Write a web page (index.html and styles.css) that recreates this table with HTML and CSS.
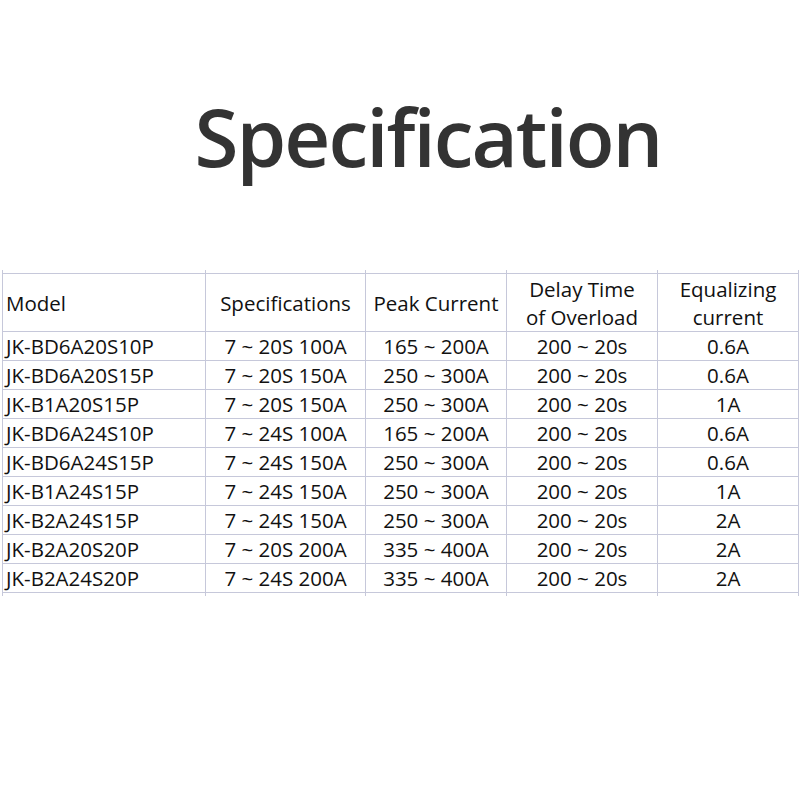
FILE: index.html
```html
<!DOCTYPE html>
<html>
<head>
<meta charset="utf-8">
<link rel="stylesheet" href="styles.css">
</head>
<body>
<div class="page">
  <h1 class="title">Specification</h1>
  <table class="spec">
    <colgroup>
      <col class="c1"><col class="c2"><col class="c3"><col class="c4"><col class="c5">
    </colgroup>
    <thead>
      <tr class="stub top"><td></td><td></td><td></td><td></td><td></td></tr>
      <tr>
        <th class="left">Model</th>
        <th>Specifications</th>
        <th>Peak Current</th>
        <th>Delay Time<br>of Overload</th>
        <th>Equalizing<br>current</th>
      </tr>
    </thead>
    <tbody>
      <tr><td class="left">JK-BD6A20S10P</td><td>7 ~ 20S 100A</td><td>165 ~ 200A</td><td>200 ~ 20s</td><td>0.6A</td></tr>
      <tr><td class="left">JK-BD6A20S15P</td><td>7 ~ 20S 150A</td><td>250 ~ 300A</td><td>200 ~ 20s</td><td>0.6A</td></tr>
      <tr><td class="left">JK-B1A20S15P</td><td>7 ~ 20S 150A</td><td>250 ~ 300A</td><td>200 ~ 20s</td><td>1A</td></tr>
      <tr><td class="left">JK-BD6A24S10P</td><td>7 ~ 24S 100A</td><td>165 ~ 200A</td><td>200 ~ 20s</td><td>0.6A</td></tr>
      <tr><td class="left">JK-BD6A24S15P</td><td>7 ~ 24S 150A</td><td>250 ~ 300A</td><td>200 ~ 20s</td><td>0.6A</td></tr>
      <tr><td class="left">JK-B1A24S15P</td><td>7 ~ 24S 150A</td><td>250 ~ 300A</td><td>200 ~ 20s</td><td>1A</td></tr>
      <tr><td class="left">JK-B2A24S15P</td><td>7 ~ 24S 150A</td><td>250 ~ 300A</td><td>200 ~ 20s</td><td>2A</td></tr>
      <tr><td class="left">JK-B2A20S20P</td><td>7 ~ 20S 200A</td><td>335 ~ 400A</td><td>200 ~ 20s</td><td>2A</td></tr>
      <tr><td class="left">JK-B2A24S20P</td><td>7 ~ 24S 200A</td><td>335 ~ 400A</td><td>200 ~ 20s</td><td>2A</td></tr>
      <tr class="stub bottom"><td></td><td></td><td></td><td></td><td></td></tr>
    </tbody>
  </table>
</div>
</body>
</html>
```

FILE: styles.css
```css
html, body {
  margin: 0;
  padding: 0;
  background: #ffffff;
}
.page {
  width: 800px;
  height: 800px;
  padding-top: 81px;
  box-sizing: border-box;
}
.title {
  margin: 0 0 0 56px;
  text-align: center;
  font-family: "Open Sans", "Noto Sans", sans-serif;
  font-weight: 600;
  font-size: 80px;
  line-height: 110px;
  color: #333333;
  letter-spacing: -2px;
}
.spec {
  margin: 79px 0 0 2px;
  width: 796px;
  border-collapse: collapse;
  table-layout: fixed;
  font-family: "Open Sans", "Noto Sans", sans-serif;
  font-size: 20.5px;
  color: #111111;
}
.c1 { width: 203px; }
.c2 { width: 160px; }
.c3 { width: 141px; }
.c4 { width: 151px; }
.c5 { width: 141px; }
.spec th, .spec td {
  border: 1px solid #c6c8da;
  text-align: center;
  font-weight: 400;
  padding: 0 1px;
  white-space: nowrap;
}
.spec th {
  height: 57px;
  line-height: 28px;
}
.spec td {
  height: 28px;
  line-height: 28px;
}
.spec .stub td {
  height: 3px;
  padding: 0;
  line-height: 0;
  font-size: 0;
}
.spec .stub.top td {
  border-top: none;
}
.spec .stub.bottom td {
  border-bottom: none;
}
.spec .left {
  text-align: left;
  padding-left: 3px;
}
```
